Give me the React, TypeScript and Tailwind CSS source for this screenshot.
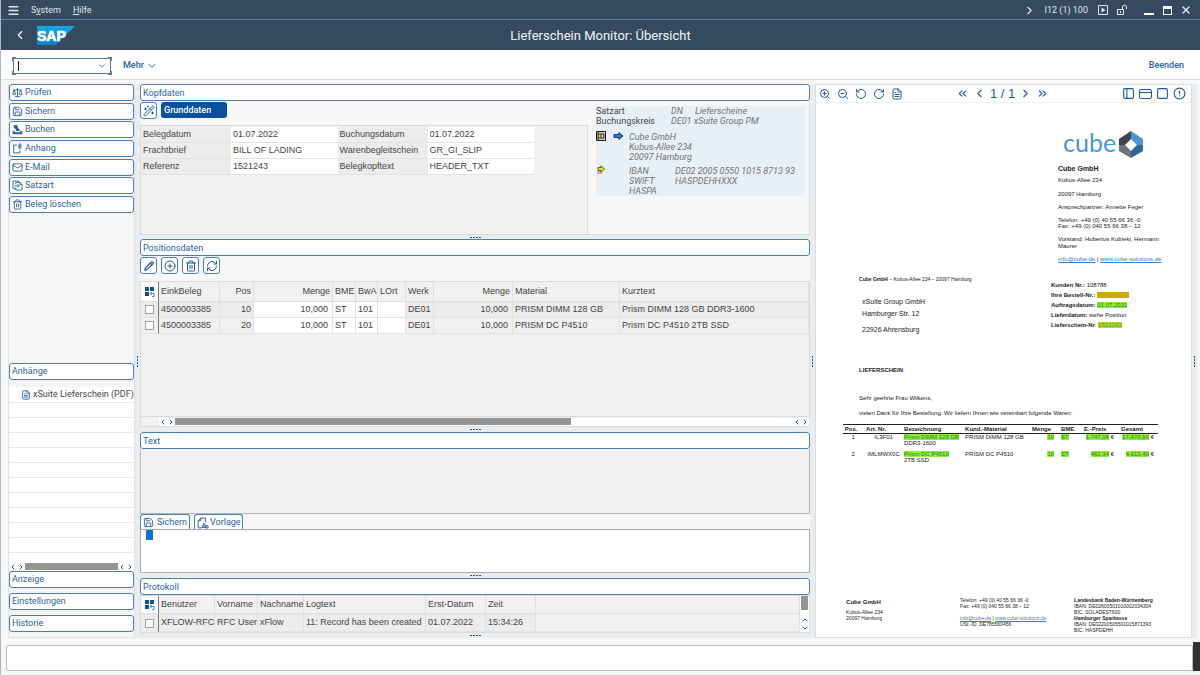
import React from 'react';
import {
  ChevronDown,
  ChevronLeft,
  ChevronRight,
  ChevronUp,
  ChevronsLeft,
  ChevronsRight,
  CircleAlert,
  CirclePlus,
  FileText,
  Mail,
  Menu,
  PanelLeft,
  Pencil,
  RefreshCw,
  RotateCcw,
  RotateCw,
  Save,
  Scale,
  Square,
  Trash2,
  WandSparkles,
  X,
  ZoomIn,
  ZoomOut,
} from 'lucide-react';

const arial = "font-['Liberation_Sans',Arial,sans-serif]";

const PostIcon = () => (
  <svg viewBox="0 0 16 16" className="size-[11px]" fill="currentColor">
    <path d="M1 10h3v2h8v-2h3v5H1z" />
    <path d="M2 2.5 5.500 1l3 1.500v3.500l2 1 1.500 3H5l1-2.500-3-1.500z" />
  </svg>
);

const AttachIcon = () => (
  <svg viewBox="0 0 16 16" className="size-[11px]" fill="none" stroke="currentColor" strokeWidth="1.400">
    <path d="M7 3H2.500v11.500h9V11" />
    <path d="M10 2.500v4.500a1.500 1.500 0 0 0 3 0V2a1 1 0 0 0-2 0v4" />
  </svg>
);

const RecordIcon = () => (
  <svg viewBox="0 0 16 16" className="size-[11px]" fill="none" stroke="currentColor" strokeWidth="1.300">
    <path d="M5.500 12.500H1.500v-11h8v2" />
    <path d="M5.500 6V3.500h6l3 3v8h-9V11M11.500 3.500v3h3M3.500 8.500h7M8 6l2.500 2.500L8 11" />
  </svg>
);

const TemplateIcon = () => (
  <svg viewBox="0 0 16 16" className="size-3" fill="none" stroke="currentColor" strokeWidth="1.300">
    <path d="M6 14.500H1.500V5L5 1.500h6.500V7M1.500 5H5V1.500" />
    <path d="M6.500 14l3-6 3 6zM11 11.500h3.500l.5 3h-4M7.500 12h4" />
  </svg>
);

const LayoutIcon = () => (
  <svg viewBox="0 0 11 11" className="mx-auto size-[11px] text-[#0f4f96]">
    <path d="M1 1h4v4H1zM6 1h4v4H6zM1 6h4v4H1z" fill="currentColor" />
    <path d="M6.500 7.500h3.500v3H8M7.500 6 6.500 7.500l1 1.500" fill="none" stroke="currentColor" strokeWidth="0.700" />
  </svg>
);

const PlayIcon = () => (
  <svg viewBox="0 0 12 12" className="size-3" fill="none" stroke="currentColor">
    <path d="M1.500 1.500h9v9h-9z" />
    <path d="M4.500 3.500v5l4-2.500z" fill="currentColor" stroke="none" />
  </svg>
);

const UnlockIcon = () => (
  <svg viewBox="0 0 12 12" className="size-3" fill="none" stroke="currentColor">
    <path d="M1.500 5.500h6v5h-6zM4.500 7v2M6.500 5.500V3a2 2 0 0 1 4 0v2" />
  </svg>
);

const actions = [
  { label: 'Prüfen', icon: <Scale size={11} /> },
  { label: 'Sichern', icon: <Save size={11} /> },
  { label: 'Buchen', icon: <PostIcon /> },
  { label: 'Anhang', icon: <AttachIcon /> },
  { label: 'E-Mail', icon: <Mail size={11} /> },
  { label: 'Satzart', icon: <RecordIcon /> },
  { label: 'Beleg löschen', icon: <Trash2 size={11} /> },
];

const fields = [
  [{ label: 'Belegdatum', value: '01.07.2022' }, { label: 'Buchungsdatum', value: '01.07.2022' }],
  [{ label: 'Frachtbrief', value: 'BILL OF LADING' }, { label: 'Warenbegleitschein', value: 'GR_GI_SLIP' }],
  [{ label: 'Referenz', value: '1521243' }, { label: 'Belegkopftext', value: 'HEADER_TXT' }],
];

const items = [
  { po: '4500003385', pos: '10', qty: '10,000', material: 'PRISM DIMM 128 GB', text: 'Prism DIMM 128 GB DDR3-1600' },
  { po: '4500003385', pos: '20', qty: '10,000', material: 'PRISM DC P4510', text: 'Prism DC P4510 2TB SSD' },
];

const pdfItems = [
  { pos: '1', art: 'IL3F01', name: 'Prism DIMM 128 GB', extra: 'DDR3-1600', material: 'PRISM DIMM 128 GB', price: '1.747,06', total: '17.470,60' },
  { pos: '2', art: 'IMLMWX0C', name: 'Prism DC P4510', extra: '2TB SSD', material: 'PRISM DC P4510', price: '461,34', total: '4.613,40' },
];

const SectionTitle = ({ children }: { children: React.ReactNode }) => (
  <h2 className="flex h-[17px] shrink-0 items-center rounded-[3px] border border-[#4a7fb5] bg-white px-[2px] pt-px text-[9px] text-[#2a62a0]">
    {children}
  </h2>
);

const SideButton = ({ label, icon }: { label: string; icon?: React.ReactNode }) => (
  <button className="flex h-[17px] w-full shrink-0 items-center gap-[2px] rounded-[3px] border border-[#4a7fb5] bg-white px-[2px] text-left text-[#2a62a0]">
    {icon}
    {label}
  </button>
);

const ToolButton = ({ label, children }: { label: string; children: React.ReactNode }) => (
  <button aria-label={label} className="flex size-[17px] items-center justify-center rounded-[3px] border border-[#4a7fb5] bg-white text-[#1d5899]">
    {children}
  </button>
);

const IconButton = ({ label, children }: { label: string; children: React.ReactNode }) => (
  <button aria-label={label} className="flex items-center">
    {children}
  </button>
);

const SplitterH = ({ className }: { className: string }) => (
  <div className={`flex shrink-0 items-center justify-center gap-px bg-[#e9edf0] ${className}`}>
    {[0, 1, 2, 3].map((i) => (
      <span key={i} className="h-px w-[2px] bg-[#1d5899]" />
    ))}
  </div>
);

const SplitterV = () => (
  <div className="flex w-[5px] shrink-0 flex-col items-center justify-center gap-px bg-[#e9edf0]">
    {[0, 1, 2, 3].map((i) => (
      <span key={i} className="h-[2px] w-px bg-[#1d5899]" />
    ))}
  </div>
);

const Check = ({ label }: { label: string }) => (
  <input type="checkbox" aria-label={label} className="mx-auto block size-[9px] appearance-none border border-[#9aa1a8] bg-white" />
);

const ScrollArrows = () => (
  <span className="flex items-center text-[#1d5899]">
    <ChevronLeft size={8} strokeWidth={3} />
    <ChevronRight size={8} strokeWidth={3} />
  </span>
);

const TopBar = () => (
  <div className="flex h-5 items-center border-b border-[#5c7c9a] bg-[#354a5f] pt-px pr-2 pl-[6px] text-[#dfe8f0]">
    <IconButton label="Menü">
      <Menu size={13} strokeWidth={3} />
    </IconButton>
    <button className="ml-[11px]">
      S<u>y</u>stem
    </button>
    <button className="ml-3">
      <u>H</u>ilfe
    </button>
    <div className="ml-auto flex items-center">
      <ChevronRight size={13} />
      <span className="ml-[9px]">I12 (1) 100</span>
      <span className="ml-[9px]"><PlayIcon /></span>
      <span className="ml-[7px]"><UnlockIcon /></span>
      <button aria-label="Minimieren" className="ml-4 h-[10px] w-[10px] border-b-2 border-white" />
      <button aria-label="Maximieren" className="ml-[9px] h-[9px] w-[9px] border border-t-[3px] border-white" />
      <button aria-label="Schließen" className="ml-2"><X size={12} strokeWidth={3} /></button>
    </div>
  </div>
);

const SapLogo = () => (
  <svg viewBox="0 0 38 19" className="h-[19px] w-[38px]" role="img" aria-label="SAP">
    <defs>
      <linearGradient id="sap" x1="0" y1="0" x2="0" y2="1">
        <stop offset="0" stopColor="#15a8e6" />
        <stop offset="1" stopColor="#0c80c8" />
      </linearGradient>
    </defs>
    <path d="M0 0h38L19 19H0z" fill="url(#sap)" />
    <text x="0" y="15" fontFamily="Liberation Sans, Arial, sans-serif" fontWeight="700" fontSize="14" fill="#fff" stroke="#fff" strokeWidth="0.700">SAP</text>
  </svg>
);

const Sidebar = () => (
  <aside className="flex w-[127px] shrink-0 flex-col border-x border-b border-[#e0e2e4] bg-[#f6f6f6]">
    <div className="flex h-[129px] shrink-0 flex-col justify-between">
      {actions.map((a) => (
        <SideButton key={a.label} {...a} />
      ))}
    </div>
    <div className="mt-auto">
      <SideButton label="Anhänge" />
    </div>
    <ul className="mt-[7px] h-[175px] shrink-0 overflow-hidden bg-white">
      <li className="flex h-4 items-center border-b border-[#e8e8e8] pl-3 whitespace-nowrap text-[#444]">
        <a href="#lieferschein" className="flex items-center gap-[2px]">
          <FileText size={10} className="shrink-0 text-[#1d5899]" />
          xSuite Lieferschein (PDF)
        </a>
      </li>
      {Array.from({ length: 10 }).map((_, i) => (
        <li key={i} className="h-[15px] border-b border-[#e8e8e8]" />
      ))}
    </ul>
    <div className="flex h-[9px] shrink-0 items-center bg-white">
      <ScrollArrows />
      <span className="h-[7px] flex-1 bg-[#959595]" />
      <ScrollArrows />
    </div>
    <div className="flex flex-col gap-[5px] pb-[5px]">
      <SideButton label="Anzeige" />
      <SideButton label="Einstellungen" />
      <SideButton label="Historie" />
    </div>
  </aside>
);

const HeaderData = () => (
  <section className="shrink-0">
    <SectionTitle>Kopfdaten</SectionTitle>
    <div className="flex h-[134px] bg-[#f7f7f7]">
      <div className="flex w-[448px] shrink-0 flex-col">
        <div className="flex h-6 shrink-0 items-start gap-1 pt-px">
          <ToolButton label="Assistent">
            <WandSparkles size={12} />
          </ToolButton>
          <button className="h-4 w-[66px] rounded-[3px] bg-[#0a509e] pl-[3px] text-left font-medium text-white">Grunddaten</button>
        </div>
        <div className="flex-1 border border-[#dcdcdc] bg-[#f1f1f1] pt-px">
          <div className={`w-[393px] text-[#444] ${arial}`}>
            {fields.map((row) => (
              <div key={row[0].label} className="flex h-4 border-b border-[#e4e4e4]">
                {row.map((f) => (
                  <React.Fragment key={f.label}>
                    <label htmlFor={f.label} className="flex w-[90px] items-center bg-[#ececec] pl-[2px] whitespace-nowrap">
                      {f.label}
                    </label>
                    <input id={f.label} defaultValue={f.value} className="min-w-0 flex-1 bg-white pl-[2px]" />
                  </React.Fragment>
                ))}
              </div>
            ))}
          </div>
        </div>
      </div>
      <div className="flex-1 border-r border-b border-[#dcdcdc] pt-[5px] pr-1 pl-2">
        <div className="grid grid-cols-[17px_16px_46px_1fr] bg-[#e8f0f7] leading-[10px] text-[#707274] italic">
          <span className="col-span-2 text-[#444] not-italic">Satzart</span>
          <span className="col-span-2 pl-[42px]">DN<span className="pl-3">Lieferscheine</span></span>
          <span className="col-span-2 text-[#444] not-italic">Buchungskreis</span>
          <span className="col-span-2 pl-[42px]">DE01 xSuite Group PM</span>
          <svg viewBox="0 0 10 10" className="mt-[5px] size-[10px]">
            <path d="M.5.500h9v9h-9z" fill="#d9c9a0" stroke="#222" />
            <path d="M2 1v8M2 3h3M2 7h3M5 3h3v4H5z" fill="none" stroke="#333" />
          </svg>
          <svg viewBox="0 0 11 10" className="mt-[5px] h-[10px] w-[11px]">
            <path d="M1 3.500h5v-2L10 5 6 8.500v-2H1z" fill="#3f74e0" stroke="#15306f" />
          </svg>
          <span className="col-span-2 pt-[6px]">
            Cube GmbH<br />Kubus-Allee 234<br />20097 Hamburg
          </span>
          <svg viewBox="0 0 10 10" className="col-span-2 mt-[3px] size-[10px]">
            <path d="M1 6h5v3H1z" fill="#dba6c4" />
            <path d="M2 2.500h3V.8L8.500 4 5 7.200V5.500H2z" fill="#ffe600" stroke="#333" strokeWidth="0.800" />
          </svg>
          <span className="pt-1">
            IBAN<br />SWIFT<br />HASPA
          </span>
          <span className="pt-1 whitespace-nowrap">
            DE02 2005 0550 1015 8713 93<br />HASPDEHHXXX
          </span>
        </div>
      </div>
    </div>
  </section>
);

const head = 'border-r border-b border-[#dfdfdf] px-[2px] font-normal whitespace-nowrap';
const cell = 'border-r border-b border-[#e2e2e2] px-[2px] whitespace-nowrap';

const ItemData = () => (
  <section className="flex flex-1 flex-col">
    <SectionTitle>Positionsdaten</SectionTitle>
    <div className="flex h-[25px] shrink-0 items-start gap-1 bg-[#f7f7f7] pt-px">
      <ToolButton label="Bearbeiten"><Pencil size={10} strokeWidth={3} /></ToolButton>
      <ToolButton label="Hinzufügen"><CirclePlus size={12} /></ToolButton>
      <ToolButton label="Löschen"><Trash2 size={12} /></ToolButton>
      <ToolButton label="Aktualisieren"><RefreshCw size={12} /></ToolButton>
    </div>
    <div className="flex flex-1 flex-col border border-[#dcdcdc] bg-[#f1f1f1]">
      <table className={`w-full table-fixed border-separate border-spacing-0 text-[#444] ${arial}`}>
        <colgroup>
          <col className="w-[18px]" />
          <col className="w-[61px]" />
          <col className="w-[34px]" />
          <col className="w-[79px]" />
          <col className="w-[23px]" />
          <col className="w-[22px]" />
          <col className="w-[28px]" />
          <col className="w-[28px]" />
          <col className="w-[79px]" />
          <col className="w-[107px]" />
          <col />
        </colgroup>
        <thead>
          <tr className="h-5 text-left">
            <th className="border-r border-b border-r-[#777] border-b-[#dfdfdf] bg-white"><LayoutIcon /></th>
            <th className={head}>EinkBeleg</th>
            <th className={`${head} text-right`}>Pos</th>
            <th className={`${head} text-right`}>Menge</th>
            <th className={head}>BME</th>
            <th className={head}>BwA</th>
            <th className={head}>LOrt</th>
            <th className={head}>Werk</th>
            <th className={`${head} text-right`}>Menge</th>
            <th className={head}>Material</th>
            <th className={head}>Kurztext</th>
          </tr>
        </thead>
        <tbody>
          {items.map((it) => (
            <tr key={it.pos} className="h-4 odd:bg-[#ececec]">
              <td className="border-r border-b border-r-[#777] border-b-[#e2e2e2]"><Check label={`Position ${it.pos}`} /></td>
              <td className={cell}>{it.po}</td>
              <td className={`${cell} text-right`}>{it.pos}</td>
              <td className={`${cell} bg-white pr-1 text-right`}>{it.qty}</td>
              <td className={`${cell} bg-white`}>ST</td>
              <td className={`${cell} bg-white`}>101</td>
              <td className={`${cell} bg-white`} />
              <td className={cell}>DE01</td>
              <td className={`${cell} pr-1 text-right`}>{it.qty}</td>
              <td className={cell}>{it.material}</td>
              <td className={cell}>{it.text}</td>
            </tr>
          ))}
        </tbody>
      </table>
      <div className="mt-auto flex h-[10px] items-center border-t border-[#dcdcdc]">
        <div className="w-[18px]" />
        <div className="flex flex-1 items-center bg-white">
          <ScrollArrows />
          <div className="flex-1">
            <div className="h-[7px] w-[64%] bg-[#959595]" />
          </div>
          <ScrollArrows />
        </div>
      </div>
    </div>
  </section>
);

const TextPanel = () => (
  <section className="shrink-0">
    <SectionTitle>Text</SectionTitle>
    <textarea aria-label="Text" readOnly className="block h-[65px] w-full resize-none border border-t-0 border-[#b4b8bc] bg-[#f1f1f1]" />
    <div className="flex h-[15px] gap-1 bg-[#f7f7f7] text-[#2a62a0]">
      <button className="flex w-[50px] items-center gap-[3px] rounded-t-[3px] border border-b-0 border-[#4a7fb5] bg-white pt-px pl-[2px]">
        <Save size={11} />
        Sichern
      </button>
      <button className="flex w-[49px] items-center gap-px rounded-t-[3px] border border-b-0 border-[#4a7fb5] bg-white pt-px pl-[2px]">
        <TemplateIcon />
        Vorlage
      </button>
    </div>
    <div className="relative">
      <textarea aria-label="Notiz" className="block h-11 w-full resize-none border border-[#a9adb1] bg-white" />
      <span className="absolute top-px left-[6px] h-[10px] w-[7px] bg-[#0a74d8]" />
    </div>
  </section>
);

const LogPanel = () => (
  <section className="shrink-0">
    <SectionTitle>Protokoll</SectionTitle>
    <div className="flex h-[38px] border border-[#dcdcdc] bg-[#f1f1f1]">
      <div className="min-w-0 flex-1">
        <table className={`w-full table-fixed border-separate border-spacing-0 text-[#444] ${arial}`}>
          <colgroup>
            <col className="w-[18px]" />
            <col className="w-[56px]" />
            <col className="w-[43px]" />
            <col className="w-[46px]" />
            <col className="w-[122px]" />
            <col className="w-[60px]" />
            <col className="w-[50px]" />
            <col />
          </colgroup>
          <thead>
            <tr className="h-[18px] text-left">
              <th className="border-r border-b border-r-[#777] border-b-[#dfdfdf] bg-white"><LayoutIcon /></th>
              {['Benutzer', 'Vorname', 'Nachname', 'Logtext', 'Erst-Datum', 'Zeit'].map((h) => (
                <th key={h} className={head}>{h}</th>
              ))}
              <th className={head} />
            </tr>
          </thead>
          <tbody>
            <tr className="h-[18px] bg-[#ececec]">
              <td className="border-r border-r-[#777]"><Check label="Protokollzeile" /></td>
              {['XFLOW-RFC', 'RFC User', 'xFlow', '11: Record has been created', '01.07.2022', '15:34:26'].map((v) => (
                <td key={v} className={cell}>{v}</td>
              ))}
              <td className={`${cell} bg-[#f1f1f1]`} />
            </tr>
          </tbody>
        </table>
      </div>
      <div className="flex w-[9px] flex-col items-center justify-between bg-white text-[#1d5899]">
        <span className="h-[14px] w-[7px] bg-[#959595]" />
        <span>
          <ChevronUp size={8} strokeWidth={3} />
          <ChevronDown size={8} strokeWidth={3} />
        </span>
      </div>
    </div>
  </section>
);

const mark = 'bg-[#8df03c] text-[#3c7a10]';

const CubeLogo = () => (
  <svg viewBox="0 -4 84 34" className="-mt-1 ml-[5px] h-[34px] w-[84px]" role="img" aria-label="cube">
    <text x="0" y="21" fontFamily="Lato, sans-serif" fontSize="25" fill="#4a97d2">cube</text>
    <path d="M68 0v8l-6 6v1h-6V8z" fill="#3d444b" />
    <path d="M56 14h6l6 6v7l-12-7z" fill="#6b7378" />
    <path d="M68 0l12 8v6h-6l-6-6z" fill="#4a97d2" />
    <path d="M80 14v6l-12 7v-7l6-6z" fill="#2e6596" />
  </svg>
);

const MailLinks = () => (
  <>
    <a href="#mail" className="text-[#2f7fd0] underline">info@cube.de</a> |{' '}
    <a href="#web" className="text-[#2f7fd0] underline">www.cube-solutions.de</a>
  </>
);

const Viewer = () => (
  <section className="flex min-w-0 flex-[376] flex-col border border-[#dcdcdc] bg-white">
    <div className="grid h-[18px] shrink-0 grid-cols-[1fr_auto_1fr] items-center border-b border-[#f2f2f2] pr-[5px] pl-[3px] text-[#1d5899]">
      <div className="flex gap-[6px]">
        <IconButton label="Vergrößern"><ZoomIn size={12} /></IconButton>
        <IconButton label="Verkleinern"><ZoomOut size={12} /></IconButton>
        <IconButton label="Links drehen"><RotateCcw size={12} /></IconButton>
        <IconButton label="Rechts drehen"><RotateCw size={12} /></IconButton>
        <IconButton label="Textansicht"><FileText size={12} /></IconButton>
      </div>
      <div className="flex items-center gap-1">
        <IconButton label="Erste Seite"><ChevronsLeft size={13} /></IconButton>
        <IconButton label="Vorherige Seite"><ChevronLeft size={13} /></IconButton>
        <span className={`text-[13px] ${arial}`}>1 / 1</span>
        <IconButton label="Nächste Seite"><ChevronRight size={13} /></IconButton>
        <IconButton label="Letzte Seite"><ChevronsRight size={13} /></IconButton>
      </div>
      <div className="flex justify-end gap-1">
        <IconButton label="Seitenleiste"><PanelLeft size={13} /></IconButton>
        <IconButton label="Breite anpassen">
          <svg viewBox="0 0 13 13" className="size-[13px]" fill="none" stroke="currentColor">
            <rect x="0.500" y="2.500" width="12" height="9" rx="1.500" />
            <path d="M.5 5.500h12" />
          </svg>
        </IconButton>
        <IconButton label="Ganze Seite"><Square size={13} /></IconButton>
        <IconButton label="Hinweis"><CircleAlert size={13} /></IconButton>
      </div>
    </div>

    <article className={`flex flex-1 flex-col pr-[33px] pl-[27px] text-[6px] leading-[7px] text-[#222] ${arial}`}>
      <div className="mt-7 ml-auto w-[100px]">
        <CubeLogo />
        <p className="mt-1 text-[7px] leading-[8px] font-bold">Cube GmbH</p>
        <p className="mt-1">Kubus-Allee 234</p>
        <p className="mt-[7px]">20097 Hamburg</p>
        <p className="mt-[6px] whitespace-nowrap">Ansprechpartner: Annette Feger</p>
        <p className="mt-[6px] leading-[6px]">Telefon: +49 (0) 40 55 66 36 -0<br />Fax: +49 (0) 040 55 66 38 – 12</p>
        <p className="mt-[7px] leading-[7px] whitespace-nowrap">Vorstand: Hubertus Kubieki, Hermann<br />Maurer</p>
        <p className="mt-[6px] whitespace-nowrap"><MailLinks /></p>
      </div>

      <div className="mt-[13px] flex justify-between pl-4">
        <div>
          <p className="text-[5px]"><b>Cube GmbH</b> – Kubus-Allee 234 – 20097 Hamburg</p>
          <address className="mt-[13px] pl-[3px] text-[7px] leading-[12px] not-italic">
            xSuite Group GmbH<br />Hamburger Str. 12
            <span className="mt-1 block">22926 Ahrensburg</span>
          </address>
        </div>
        <div className="mt-1 w-[107px] leading-[10px]">
          <p><b>Kunden Nr.:</b> 108788</p>
          <p className="flex items-center gap-[2px]"><b>Ihre Bestell-Nr.:</b> <span className="h-[6px] w-8 bg-[#d0a80c]" /></p>
          <p><b>Auftragsdatum:</b> <span className={mark}>01.07.2022</span></p>
          <p><b>Lieferdatum:</b> siehe Position</p>
          <p><b>Lieferschein-Nr</b>: <span className="bg-[#a8dc28] text-[#7a8c30]">1521243</span></p>
        </div>
      </div>

      <h3 className="mt-[31px] pl-4 font-bold">LIEFERSCHEIN</h3>
      <p className="mt-[21px] pl-4">Sehr geehrte Frau Wilkens,</p>
      <p className="mt-2 pl-4">vielen Dank für Ihre Bestellung. Wir liefern Ihnen wie vereinbart folgende Waren:</p>

      <table className="mt-[7px] table-fixed leading-[6px]">
        <colgroup>
          <col className="w-5" />
          <col className="w-[41px]" />
          <col className="w-[61px]" />
          <col className="w-16" />
          <col className="w-[25px]" />
          <col className="w-[25px]" />
          <col />
          <col className="w-11" />
        </colgroup>
        <thead>
          <tr className="h-[9px] border-y border-[#222] text-left">
            <th>&nbsp;Pos.</th>
            <th className="pl-[3px]">Art. Nr.</th>
            <th>Bezeichnung</th>
            <th>Kund.-Material</th>
            <th className="text-center">Menge</th>
            <th className="pl-[7px]">BME</th>
            <th className="pl-[5px]">E.-Preis</th>
            <th className="pl-[7px]">Gesamt</th>
          </tr>
        </thead>
        <tbody>
          {pdfItems.map((p) => (
            <tr key={p.pos} className="h-[17px] align-top">
              <td className="text-center">{p.pos}</td>
              <td className="text-center">{p.art}</td>
              <td className="whitespace-nowrap"><span className={mark}>{p.name}</span><br />{p.extra}</td>
              <td className="whitespace-nowrap">{p.material}</td>
              <td className="text-right"><span className={mark}>10</span></td>
              <td className="pl-[7px]"><span className={mark}>ST</span></td>
              <td className="text-right whitespace-nowrap"><span className={mark}>{p.price}</span> €</td>
              <td className="pr-1 text-right whitespace-nowrap"><span className={mark}>{p.total}</span> €</td>
            </tr>
          ))}
        </tbody>
      </table>

      <footer className="mt-auto mb-1 grid grid-cols-[114px_114px_1fr] pl-[3px] text-[5px] leading-[6px]">
        <div>
          <p className="mt-[2px] text-[6px] font-bold">Cube GmbH</p>
          <p className="mt-1">Kubus-Allee 234<br />20097 Hamburg</p>
        </div>
        <div className="whitespace-nowrap">
          <p>Telefon: +49 (0) 40 55 66 36 -0<br />Fax: +49 (0) 040 55 66 38 – 12</p>
          <p className="mt-[6px]"><MailLinks /><br />USt.-ID: DE785560456</p>
        </div>
        <div className="whitespace-nowrap">
          <b>Landesbank Baden-Württemberg</b><br />
          IBAN: DE02600501010002034304<br />
          BIC: SOLADEST600<br />
          <b>Hamburger Sparkasse</b><br />
          IBAN: DE02200505501015871393<br />
          BIC: HASPDEHH
        </div>
      </footer>
    </article>
  </section>
);

export default function App() {
  return (
    <div className="flex min-h-screen flex-col border-l border-[#a3b8cc] bg-[#f7f7f7] font-['Roboto','Noto_Sans',sans-serif] text-[9px] leading-[11px]">
      <TopBar />
      <header className="relative flex h-[30px] items-center bg-[#354a5f] pl-3">
        <button aria-label="Zurück" className="text-white"><ChevronLeft size={14} /></button>
        <span className="ml-[10px]"><SapLogo /></span>
        <h1 className="absolute inset-x-0 text-center text-[13px] text-[#f2f5f8]">Lieferschein Monitor: Übersicht</h1>
      </header>

      <div className="flex h-[30px] items-center border-b border-[#dadada] bg-white pt-[2px] pr-4 pl-3 text-[#2a62a0]">
        <div className="relative flex h-4 w-[98px] items-center border border-[#4a7fb5]">
          <input aria-label="Transaktion" className="h-full w-full" />
          <span className="absolute left-[4px] h-[10px] w-px bg-[#222]" />
          <button aria-label="Liste öffnen" className="absolute right-[3px]"><ChevronDown size={10} /></button>
          <span className="absolute -top-[2px] -left-[2px] size-1 border-t-2 border-l-2 border-[#777]" />
          <span className="absolute -top-[2px] -right-[2px] size-1 border-t-2 border-r-2 border-[#777]" />
          <span className="absolute -bottom-[2px] -left-[2px] size-1 border-b-2 border-l-2 border-[#777]" />
          <span className="absolute -right-[2px] -bottom-[2px] size-1 border-r-2 border-b-2 border-[#777]" />
        </div>
        <button className="ml-3 flex items-center gap-[2px] font-medium">
          Mehr <ChevronDown size={12} />
        </button>
        <button className="ml-auto font-medium">Beenden</button>
      </div>

      <main className="flex flex-1 pt-1 pr-[3px] pb-[7px] pl-[7px]">
        <Sidebar />
        <SplitterV />
        <div className="flex min-w-0 flex-[672] flex-col">
          <HeaderData />
          <SplitterH className="h-1" />
          <ItemData />
          <SplitterH className="h-[5px]" />
          <TextPanel />
          <SplitterH className="h-[5px]" />
          <LogPanel />
          <SplitterH className="h-[5px]" />
        </div>
        <SplitterV />
        <Viewer />
        <SplitterV />
      </main>

      <div className="mb-1 flex h-[26px] shrink-0 pl-[5px]">
        <div role="status" className="flex-1 rounded-[2px] border border-[#b9bcbf] bg-white" />
        <div className="-mt-[3px] w-[7px] bg-[#34322f]" />
      </div>
    </div>
  );
}
